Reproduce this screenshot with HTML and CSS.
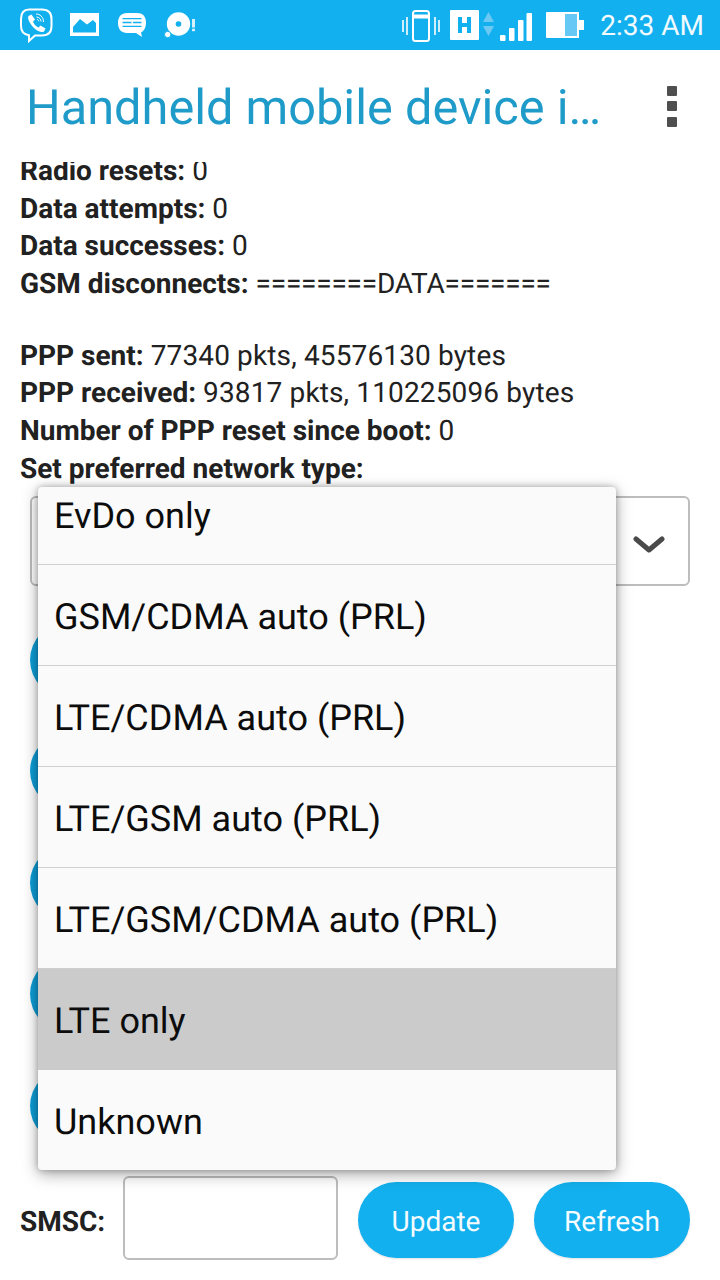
FILE: index.html
```html
<!DOCTYPE html>
<html lang="en">
<head>
<meta charset="utf-8">
<title>Handheld mobile device information</title>
<link rel="stylesheet" href="styles.css">
</head>
<body>
<div class="screen">
  <header class="status">
    <div class="status-left">
      <svg class="ic-viber" width="34" height="35" viewBox="0 0 34 35"><path d="M10 1.500h13c6 0 9.500 3.500 9.500 9.500v7c0 6-3.500 9.500-9.500 9.500h-7l-6 5.500v-5.700C5 26.500 2 23.500 2 18v-7C2 5 5 1.500 10 1.500z" fill="none" stroke="#fff" stroke-width="2"/><path d="M9.500 8l3-1.500 3.500 5-2 2c1 3 3 5 5.500 6l2-2 5 3-1.500 3c-2 1.300-6 .5-10-3.500S8 10.500 9.500 8z" fill="#fff"/><path d="M17 6c4 0 7.500 3 7.500 8M17.500 9c2.500 0 4.500 2 4.500 4.500M18 11.500c1 0 1.800.8 1.800 1.800" fill="none" stroke="#fff" stroke-width="1"/></svg>
      <svg class="ic-gallery" width="29" height="23" viewBox="0 0 29 23"><path d="M0 0h29v23H0z M3 19.500h23V10l-3-3-6 4.500L10 6l-7 8z" fill="#fff" fill-rule="evenodd"/></svg>
      <svg class="ic-msg" width="28" height="24" viewBox="0 0 28 24"><path d="M9 0h10c5.500 0 9 3 9 9.500 0 5.500-2.500 9-5 10l1 4.500-6-4H9c-5.500 0-9-3.500-9-10S3.500 0 9 0z" fill="#fff"/><path d="M4.500 5.700h19M4.500 9.500h9M15 9.500h8.500M4.500 13.300h19" stroke="#12b0ee" stroke-width="1.300"/></svg>
      <svg class="ic-disc" width="32" height="27" viewBox="0 0 32 27"><circle cx="14.500" cy="12" r="11.700" fill="#fff"/><circle cx="14.500" cy="12" r="2.800" fill="#12b0ee"/><circle cx="3.700" cy="22.500" r="3.200" fill="#fff" stroke="#12b0ee" stroke-width="1"/><rect x="28" y="7" width="3" height="8.500" fill="#d5f1fc"/><rect x="28" y="16.700" width="3" height="2.500" fill="#d5f1fc"/></svg>
    </div>
    <div class="status-right">
      <svg class="ic-vib" width="38" height="32" viewBox="0 0 38 32"><path d="M1 10v12M5 7v18M33 7v18M37 10v12" stroke="#cdeefb" stroke-width="2" fill="none"/><rect x="11" y="1" width="16" height="30" rx="2.500" fill="none" stroke="#fff" stroke-width="2"/><path d="M11 6.500h16" stroke="#fff" stroke-width="4"/></svg>
      <svg class="ic-h" width="29" height="30" viewBox="0 0 29 30"><path d="M1 0h27a1 1 0 0 1 1 1v28a1 1 0 0 1-1 1H1a1 1 0 0 1-1-1V1a1 1 0 0 1 1-1z M8 7v16h4v-6h5v6h4V7h-4v6h-5V7z" fill="#fff" fill-rule="evenodd"/></svg>
      <svg class="ic-arrows" width="11" height="24" viewBox="0 0 11 24"><path d="M5.500 0L11 10H0zM5.500 24L0 14h11z" fill="#6cc9f3"/></svg>
      <svg class="ic-signal" width="32" height="28" viewBox="0 0 32 28"><rect x="0" y="22" width="5.500" height="6" rx="1" fill="#fff"/><rect x="9" y="15" width="5.500" height="13" rx="1" fill="#fff"/><rect x="18" y="7" width="5.500" height="21" rx="1" fill="#fff"/><rect x="26.500" y="0" width="5.500" height="28" rx="1" fill="#fff"/></svg>
      <svg class="ic-batt" width="38" height="26" viewBox="0 0 38 26"><path d="M1 0h32v26H1a1 1 0 0 1-1-1V1a1 1 0 0 1 1-1z" fill="#fff"/><rect x="19" y="2" width="12" height="22" fill="#66c8f4"/><rect x="33" y="8" width="5" height="10" fill="#fff"/></svg>
      <span class="time">2:33 AM</span>
    </div>
  </header>

  <div class="appbar">
    <h1 class="title">Handheld mobile device i…</h1>
    <div class="overflow"><i></i><i></i><i></i></div>
  </div>

  <main class="scroller">
    <div class="scroll-inner">
      <section class="info">
        <p><b>Radio resets:</b> 0</p>
        <p><b>Data attempts:</b> 0</p>
        <p><b>Data successes:</b> 0</p>
        <p><b>GSM disconnects:</b> <span class="rule">========DATA=======</span></p>
        <p class="spaced"><b>PPP sent:</b> <span class="val">77340 pkts, 45576130 bytes</span></p>
        <p><b>PPP received:</b> <span class="val">93817 pkts, 110225096 bytes</span></p>
        <p><b>Number of PPP reset since boot:</b> 0</p>
        <p><b>Set preferred network type:</b></p>
      </section>
      <div class="select"><svg width="32" height="18" viewBox="0 0 32 18"><path d="M3 3l13 11L29 3" fill="none" stroke="#4a4a4a" stroke-width="5" stroke-linecap="round" stroke-linejoin="round"/></svg></div>
      <div class="pills">
        <div class="pill"></div>
        <div class="pill"></div>
        <div class="pill"></div>
        <div class="pill"></div>
        <div class="pill"></div>
      </div>
      <div class="smsc">
        <b class="smsc-label">SMSC:</b>
        <div class="field"></div>
        <button class="btn">Update</button>
        <button class="btn">Refresh</button>
      </div>
    </div>
  </main>

  <div class="menu">
    <ul class="menu-list">
      <li>EvDo only</li>
      <li>GSM/CDMA auto (PRL)</li>
      <li>LTE/CDMA auto (PRL)</li>
      <li>LTE/GSM auto (PRL)</li>
      <li>LTE/GSM/CDMA auto (PRL)</li>
      <li class="selected">LTE only</li>
      <li>Unknown</li>
    </ul>
  </div>
</div>
</body>
</html>
```

FILE: styles.css
```css
* { box-sizing: border-box; }
html, body { margin: 0; padding: 0; background: #fff; }
.screen {
  position: relative;
  width: 720px;
  height: 1280px;
  overflow: hidden;
  display: flex;
  flex-direction: column;
  font-family: Roboto, "Noto Sans", sans-serif;
  text-rendering: geometricPrecision;
  background: #fff;
}
.status {
  flex: none;
  height: 50px;
  background: #12b0ee;
  display: flex;
  justify-content: space-between;
  align-items: center;
}
.status-left { display: flex; align-items: flex-start; padding-left: 19px; height: 50px; }
.status-left svg, .status-right svg { display: block; flex: none; }
.ic-viber { margin-top: 8px; }
.ic-gallery { margin-top: 13px; margin-left: 17px; }
.ic-msg { margin-top: 13px; margin-left: 19px; }
.ic-disc { margin-top: 12px; margin-left: 18px; }
.status-right { display: flex; align-items: flex-start; height: 50px; padding-right: 16px; }
.ic-vib { margin-top: 10px; }
.ic-h { margin-top: 10px; margin-left: 10px; }
.ic-arrows { margin-top: 12px; margin-left: 4px; }
.ic-signal { margin-top: 13px; margin-left: 6px; }
.ic-batt { margin-top: 12px; margin-left: 14px; }
.time { margin-left: 16px; font-size: 28px; line-height: 52px; color: #f1fafe; }

.appbar {
  flex: none;
  height: 112px;
  display: flex;
  align-items: center;
  justify-content: space-between;
  padding: 0 43px 0 26px;
  background: #fff;
}
.title { margin: 0; padding-top: 3px; font-size: 48.700px; font-weight: 400; color: #1f9bc9; white-space: nowrap; }
.overflow { display: flex; flex-direction: column; gap: 5.500px; }
.overflow i { display: block; width: 10px; height: 10px; border-radius: 1px; background: #4f4f4f; }

.scroller { flex: 1; overflow: hidden; }
.scroll-inner { margin-top: -10px; padding: 0 30px 0 20px; }
.info { color: #212121; font-size: 28px; line-height: 37.600px; }
.info p { margin: 0; white-space: nowrap; }
.info b { font-weight: 700; }
.info .spaced { margin-top: 34.400px; }
.info .val { letter-spacing: .14px; }
.info .rule { letter-spacing: -.2px; }

.select {
  margin: 8.600px 0 0 10px;
  height: 90px;
  border: 2px solid #bdbdbd;
  border-radius: 6px;
  display: flex;
  align-items: center;
  justify-content: flex-end;
  padding: 8px 23px 0 0;
}
.pills { display: flex; flex-direction: column; gap: 35.500px; margin: 36px 0 0 10px; }
.pill { width: 300px; height: 76px; border-radius: 38px; background: #0f9fd8; }
.smsc { display: flex; align-items: center; margin-top: 32px; }
.smsc-label { padding-top: 3px; font-size: 28px; color: #212121; width: 103px; flex: none; }
.field { width: 215px; height: 84px; margin-bottom: 4px; border: 2px solid #bdbdbd; border-radius: 6px; flex: none; }
.btn {
  width: 156px;
  height: 76px;
  margin-left: 20px;
  padding: 4px 0 0;
  border: 0;
  border-radius: 38px;
  background: #12b0ee;
  color: #f4fbfe;
  font: 400 28px Roboto, sans-serif;
  text-rendering: geometricPrecision;
  flex: none;
  box-shadow: 0 1px 2px rgba(0,0,0,.12);
}

.menu {
  position: absolute;
  left: 38px;
  top: 487px;
  width: 578px;
  height: 683px;
  background: #fafafa;
  border-radius: 4px;
  overflow: hidden;
  box-shadow: 0 4px 16px rgba(0,0,0,.35), 0 0 6px rgba(0,0,0,.25);
}
.menu-list { list-style: none; margin: -23px 0 0; padding: 0; }
.menu-list li {
  height: 101px;
  padding: 3px 0 0 16px;
  display: flex;
  align-items: center;
  font-size: 36px;
  color: #0c0c0c;
  border-bottom: 1px solid #cfcfcf;
  white-space: nowrap;
}
.menu-list li.selected { background: #cbcbcb; border-bottom-color: #cbcbcb; }
.menu-list li:last-child { border-bottom: 0; }
```
